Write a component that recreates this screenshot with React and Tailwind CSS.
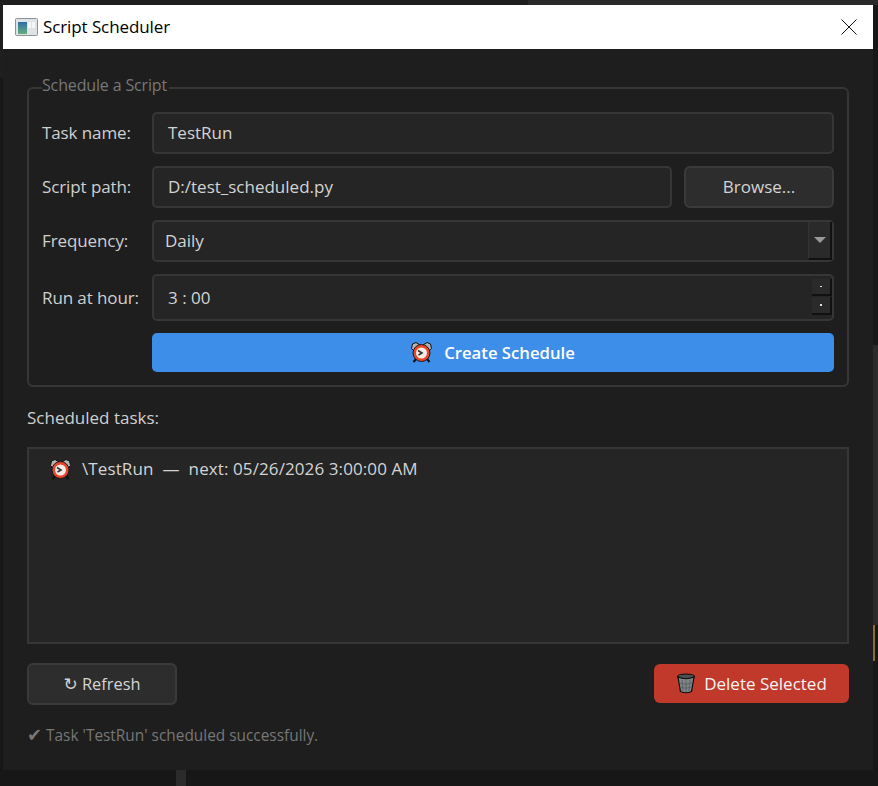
const inputClass =
  "flex items-center bg-[#252525] border-2 border-[#363636] rounded-[5px] text-[#d4d4d4]";

function AlarmIcon() {
  return (
    <svg width="21" height="21" viewBox="0 0 21 21" className="shrink-0">
      <path d="M0.5 6.5 L1.5 2 L5 0.5 L9 3 L3 9 Z" fill="#b4b4b4" stroke="#111" strokeWidth="1" />
      <path d="M20.5 6.5 L19.5 2 L16 0.5 L12 3 L18 9 Z" fill="#b4b4b4" stroke="#111" strokeWidth="1" />
      <path d="M5 17 L2.5 20 M16 17 L18.5 20" stroke="#111" strokeWidth="2" />
      <circle cx="10.5" cy="11" r="8.5" fill="#e8452b" stroke="#1a1a1a" strokeWidth="1" />
      <circle cx="10.5" cy="11" r="5.5" fill="#f7ede6" />
      <path d="M7 8.5 L11 11 L7.5 13" fill="none" stroke="#333" strokeWidth="1.6" />
    </svg>
  );
}

function TrashIcon() {
  return (
    <svg width="20" height="21" viewBox="0 0 20 21" className="shrink-0">
      <ellipse cx="10" cy="3.5" rx="8.5" ry="2.5" fill="#4a4f52" stroke="#0c0c0c" strokeWidth="1.2" />
      <path d="M2 4 L4.5 18.5 Q10 21 15.5 18.5 L18 4 Q10 7.5 2 4 Z" fill="#7f8689" stroke="#0c0c0c" strokeWidth="1.2" />
      <path d="M6 7 L7 18 M10 7.5 L10 19 M14 7 L13 18 M3.5 10 Q10 12.5 16.5 10 M4 14 Q10 16.5 16 14" stroke="#5b6164" strokeWidth="1" fill="none" />
    </svg>
  );
}

function AppIcon() {
  return (
    <svg width="23" height="18" viewBox="0 0 23 18" className="shrink-0">
      <rect x="0.5" y="0.5" width="22" height="17" rx="1" fill="#dfe3e6" stroke="#8b9296" />
      <defs>
        <linearGradient id="pane" x1="0" y1="0" x2="0" y2="1">
          <stop offset="0" stopColor="#2f6da8" />
          <stop offset="1" stopColor="#66ad7c" />
        </linearGradient>
      </defs>
      <rect x="3" y="4" width="9" height="12" fill="url(#pane)" />
      <rect x="13" y="4" width="3" height="6" fill="#f6f6f6" />
      <rect x="17" y="4" width="3" height="6" fill="#f6f6f6" />
    </svg>
  );
}

function FormRow({ label, children }) {
  return (
    <div className="flex items-center">
      <span className="w-[110px] shrink-0 text-[#cfcfcf] tracking-[-0.1px] whitespace-nowrap">{label}</span>
      <div className="flex flex-1 gap-3">{children}</div>
    </div>
  );
}

export default function App() {
  return (
    <div className="relative w-[878px] h-[786px] overflow-hidden bg-[#171717] pt-[5px] pl-[3px] font-['Open_Sans','Noto_Sans',sans-serif] text-[17px] text-[#d4d4d4]">
      {/* bits of the windows behind */}
      <div className="absolute left-0 top-0 w-[528px] h-[5px] bg-[#1f1f1f]" />
      <div className="absolute left-0 top-0 w-[3px] h-[78px] bg-[#1f1f1f]" />
      <div className="absolute left-[528px] top-0 w-[350px] h-[5px] bg-[#2a2a2a]" />
      <div className="absolute left-[176px] top-[770px] w-[10px] h-[16px] bg-[#2b2b2b]" />
      <div className="absolute left-[873px] top-[345px] w-[5px] h-[280px] bg-[#2b2b2b]" />
      <div className="absolute left-[873px] top-[625px] w-[2px] h-[36px] bg-[#8a6d2f]" />

      <div className="relative w-[870px] h-[765px] bg-[#1e1e1e] flex flex-col">
        {/* Title bar */}
        <div className="h-[44px] shrink-0 bg-white flex items-center pl-[12px] pr-[16px] text-black">
          <AppIcon />
          <span className="ml-[5px] tracking-[-0.1px]">Script Scheduler</span>
          <svg width="16" height="16" viewBox="0 0 16 16" className="ml-auto">
            <path d="M0.5 0.5 L15.5 15.5 M15.5 0.5 L0.5 15.5" stroke="#111" strokeWidth="1" />
          </svg>
        </div>

        <div className="flex-1 flex flex-col px-[24px] pt-[26px]">
          {/* Group box */}
          <fieldset className="h-[312px] border-2 border-[#363636] rounded-[6px] px-[13px] pt-[11px]">
            <legend className="pr-[2px] pb-[6px] text-[16px] text-[#777] leading-[20px] tracking-[-0.15px]">Schedule a Script</legend>
            <div className="flex flex-col gap-3">
              <FormRow label="Task name:">
                <div className={`${inputClass} flex-1 h-[42px] pl-[14px]`}>TestRun</div>
              </FormRow>
              <FormRow label="Script path:">
                <div className={`${inputClass} flex-1 h-[42px] pl-[14px]`}>D:/test_scheduled.py</div>
                <button className="w-[150px] h-[42px] bg-[#2d2d2d] border-2 border-[#3a3a3a] rounded-[6px] text-[#d4d4d4]">
                  Browse...
                </button>
              </FormRow>
              <FormRow label="Frequency:">
                <div className={`${inputClass} flex-1 h-[42px] pl-[11px] relative`}>
                  Daily
                  <div className="absolute right-0 top-0 bottom-0 w-[24px] bg-[#2a2a2a] border-l border-[#333] border-b-2 border-b-[#111] border-r-2 border-r-[#111] flex items-center justify-center">
                    <div className="w-0 h-0 border-x-[6px] border-x-transparent border-t-[6px] border-t-[#999]" />
                  </div>
                </div>
              </FormRow>
              <FormRow label="Run at hour:">
                <div className={`${inputClass} flex-1 h-[47px] pl-[14px] relative`}>
                  3 : 00
                  <div className="absolute right-0 top-[3px] w-[20px] flex flex-col gap-[1px]">
                    <div className="h-[17px] bg-[#2a2a2a] border-b-2 border-b-[#111] border-r-2 border-r-[#111] flex items-center justify-center">
                      <div className="w-[2px] h-[1px] bg-[#ddd]" />
                    </div>
                    <div className="h-[18px] bg-[#2a2a2a] border-b-2 border-b-[#111] border-r-2 border-r-[#111] flex items-center justify-center">
                      <div className="w-[2px] h-[2px] bg-[#ddd]" />
                    </div>
                  </div>
                </div>
              </FormRow>
              <div className="pl-[110px]">
                <button className="w-full h-[39px] bg-[#3d8ee8] rounded-[5px] text-[16.7px] text-white font-semibold flex items-center justify-center gap-[12px]">
                  <AlarmIcon />
                  Create Schedule
                </button>
              </div>
            </div>
          </fieldset>

          <div className="mt-[19px] leading-[24px] text-[#cfcfcf]">Scheduled tasks:</div>

          {/* Task list */}
          <div className="mt-[17px] h-[197px] bg-[#252525] border-2 border-[#363636] pl-[21px] pt-[9px]">
            <div className="flex items-center h-[22px]">
              <AlarmIcon />
              <span className="ml-[11px] whitespace-pre tracking-[0.1px]">\TestRun  —  next: 05/26/2026 3:00:00 AM</span>
            </div>
          </div>

          {/* Bottom buttons */}
          <div className="mt-[19px] flex items-start justify-between">
            <button className="w-[150px] h-[42px] bg-[#2d2d2d] border-2 border-[#3a3a3a] rounded-[6px] pt-[2px] text-[16.4px] text-[#d4d4d4]">
              <span className="font-['DejaVu_Sans'] text-[17px]">↻</span> Refresh
            </button>
            <button className="mt-[1px] w-[195px] h-[39px] bg-[#c0392b] rounded-[6px] text-[#f4f4f4] flex items-center justify-center gap-[8px]">
              <TrashIcon />
              Delete Selected
            </button>
          </div>

          <div className="mt-[18px] text-[15.4px] text-[#777] leading-[24px]">
            <span className="font-['DejaVu_Sans'] text-[18px]">✔</span> Task 'TestRun' scheduled successfully.
          </div>
        </div>
      </div>
    </div>
  );
}
